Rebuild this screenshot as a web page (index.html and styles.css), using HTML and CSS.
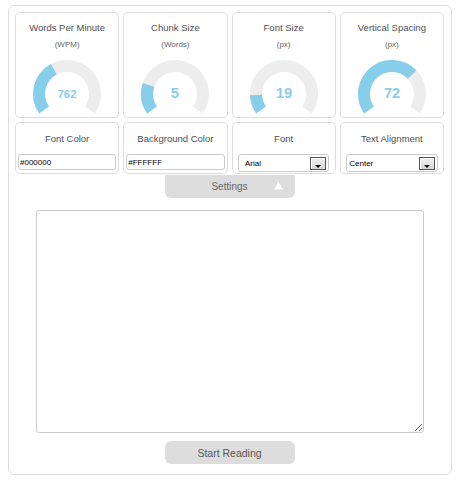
FILE: index.html
```html
<!DOCTYPE html>
<html>
<head>
<meta charset="utf-8">
<title>Speed Reader</title>
<link rel="stylesheet" href="styles.css">
</head>
<body>
<div class="app">
  <div class="grid row1">
    <div class="card gauge-card">
      <div class="title">Words Per Minute</div>
      <div class="sub">(WPM)</div>
      <svg class="gauge" viewBox="0 0 80 56" width="80" height="56">
        <path class="track" d="M17.06 50.06 A28 28 0 1 1 62.94 50.06"/>
        <path class="fill" d="M17.06 50.06 A28 28 0 0 1 26.85 9.28"/>
        <text x="40" y="37.5" class="num n-small">762</text>
      </svg>
    </div>
    <div class="card gauge-card">
      <div class="title">Chunk Size</div>
      <div class="sub">(Words)</div>
      <svg class="gauge" viewBox="0 0 80 56" width="80" height="56">
        <path class="track" d="M17.06 50.06 A28 28 0 1 1 62.94 50.06"/>
        <path class="fill" d="M17.06 50.06 A28 28 0 0 1 13.53 24.88"/>
        <text x="40" y="38" class="num n-big">5</text>
      </svg>
    </div>
    <div class="card gauge-card">
      <div class="title">Font Size</div>
      <div class="sub">(px)</div>
      <svg class="gauge" viewBox="0 0 80 56" width="80" height="56">
        <path class="track" d="M17.06 50.06 A28 28 0 1 1 62.94 50.06"/>
        <path class="fill" d="M17.06 50.06 A28 28 0 0 1 12.02 34.98"/>
        <text x="40" y="38" class="num n-mid">19</text>
      </svg>
    </div>
    <div class="card gauge-card">
      <div class="title">Vertical Spacing</div>
      <div class="sub">(px)</div>
      <svg class="gauge" viewBox="0 0 80 56" width="80" height="56">
        <path class="track" d="M17.06 50.06 A28 28 0 1 1 62.94 50.06"/>
        <path class="fill" d="M17.06 50.06 A28 28 0 0 1 60.14 14.55"/>
        <text x="40" y="38" class="num n-mid">72</text>
      </svg>
    </div>
  </div>
  <div class="grid row2">
    <div class="card opt-card">
      <div class="title">Font Color</div>
      <input class="field" type="text" value="#000000">
    </div>
    <div class="card opt-card">
      <div class="title">Background Color</div>
      <input class="field" type="text" value="#FFFFFF">
    </div>
    <div class="card opt-card">
      <div class="title">Font</div>
      <div class="select"><span class="sel-text">Arial</span><span class="sel-btn"><span class="sel-arrow"></span></span></div>
    </div>
    <div class="card opt-card">
      <div class="title">Text Alignment</div>
      <div class="select select-tight"><span class="sel-text">Center</span><span class="sel-btn"><span class="sel-arrow"></span></span></div>
    </div>
  </div>
  <div class="tab">
    <span class="tab-text">Settings</span>
    <svg class="tab-tri" viewBox="0 0 9 9" width="9" height="9"><polygon points="4.5,0.5 8.8,8.6 0.2,8.6"/></svg>
  </div>
  <textarea class="reader"></textarea>
  <button class="start" type="button">Start Reading</button>
</div>
</body>
</html>
```
FILE: styles.css
```css
html, body {
  background: #fff;
}
body {
  margin: 5px 8px;
  font-family: "Liberation Sans", Arial, sans-serif;
  color: #555;
}
.app {
  width: 444px;
  box-sizing: border-box;
  border: 1px solid #ddd;
  border-radius: 6px;
  padding: 6px 7px 10px 6px;
  display: flex;
  flex-direction: column;
  align-items: center;
}
.grid {
  width: 100%;
  display: grid;
  grid-template-columns: repeat(4, 1fr);
  gap: 4px;
}
.row2 {
  margin-top: 4px;
}
.card {
  box-sizing: border-box;
  border: 1px solid #ddd;
  border-radius: 5px;
  background: #fff;
  display: flex;
  flex-direction: column;
  align-items: center;
}
.gauge-card {
  height: 106px;
}
.opt-card {
  height: 52px;
}
.title {
  font-size: 9.5px;
  line-height: 12px;
  margin-top: 9px;
  color: #4f4f4f;
  white-space: nowrap;
}
.sub {
  font-size: 8px;
  line-height: 10px;
  margin-top: 6px;
  color: #666;
}
.gauge {
  display: block;
  margin-top: 10px;
}
.track, .fill {
  fill: none;
  stroke-width: 12;
}
.track {
  stroke: #ededed;
}
.fill {
  stroke: #87ceeb;
}
.num {
  font-family: "Liberation Sans", Arial, sans-serif;
  font-weight: bold;
  fill: #87ceeb;
  text-anchor: middle;
}
.n-small { font-size: 11.5px; }
.n-mid { font-size: 14.5px; }
.n-big { font-size: 15px; }
.opt-card .title {
  margin-top: 10px;
}
.field {
  box-sizing: border-box;
  width: calc(100% - 4px);
  height: 16px;
  margin: 9px 0 0;
  padding: 0 1px;
  border: 1px solid #ccc;
  border-radius: 3px;
  font-family: "Liberation Sans", Arial, sans-serif;
  font-size: 8px;
  color: #000;
  background: #fff;
  outline: none;
}
.select {
  box-sizing: border-box;
  width: calc(100% - 11px);
  height: 18px;
  margin-top: 9px;
  padding: 0 2px 0 6px;
  border: 1px solid #ccc;
  border-radius: 3px;
  display: flex;
  align-items: center;
  justify-content: space-between;
  font-size: 8px;
  color: #000;
}
.select-tight {
  padding-left: 2px;
}
.sel-btn {
  box-sizing: border-box;
  width: 16px;
  height: 13px;
  margin-top: 1px;
  border: 1px solid #555;
  background: linear-gradient(#f2f2f2, #d6d6d6);
  box-shadow: inset 1px 1px 0 #fff;
  display: flex;
  justify-content: center;
  align-items: flex-end;
  padding-bottom: 1px;
}
.sel-arrow {
  width: 0;
  height: 0;
  border-left: 3px solid transparent;
  border-right: 3px solid transparent;
  border-top: 3px solid #000;
}
.tab {
  position: relative;
  box-sizing: border-box;
  width: 130px;
  height: 23px;
  margin-top: 1px;
  background: #ddd;
  border-radius: 0 0 6px 6px;
  display: flex;
  align-items: center;
  justify-content: center;
}
.tab-text {
  font-size: 10px;
  color: #666;
}
.tab-tri {
  position: absolute;
  right: 12px;
  top: 6px;
  fill: #fff;
}
.reader {
  display: block;
  box-sizing: border-box;
  width: 388px;
  height: 223px;
  margin-top: 12px;
  border: 1px solid #ccc;
  border-radius: 3px;
  background: #fff;
  outline: none;
}
.start {
  box-sizing: border-box;
  width: 130px;
  height: 23px;
  margin-top: 8px;
  border: none;
  border-radius: 6px;
  background: #ddd;
  font-family: "Liberation Sans", Arial, sans-serif;
  font-size: 10.5px;
  color: #555;
  padding: 0;
}
```
